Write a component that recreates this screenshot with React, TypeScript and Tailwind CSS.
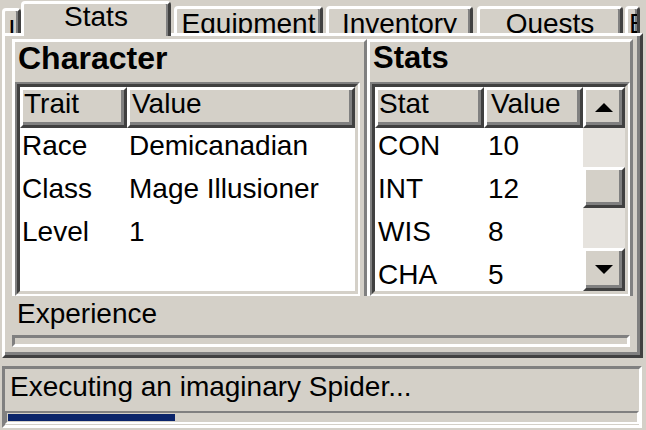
import React from 'react';

const raised =
  'border-[3px] border-t-white border-l-white border-r-[#404040] border-b-[#404040] shadow-[inset_-3px_-3px_0_#808080] bg-[#d4d0c8]';

interface Row {
  key: string;
  value: string;
}

const traits: Row[] = [
  { key: 'Race', value: 'Demicanadian' },
  { key: 'Class', value: 'Mage Illusioner' },
  { key: 'Level', value: '1' },
];

const stats: Row[] = [
  { key: 'CON', value: '10' },
  { key: 'INT', value: '12' },
  { key: 'WIS', value: '8' },
  { key: 'CHA', value: '5' },
];

function Tab({ label, className, active }: { label: string; className: string; active?: boolean }) {
  return (
    <div
      className={`${className} rounded-t-[4px] border-t-[3px] border-l-[3px] border-r-[3px] border-t-white border-l-white border-r-[#404040] shadow-[inset_-2px_0_0_#808080] bg-[#d4d0c8] overflow-hidden whitespace-nowrap text-center ${
        active ? 'relative z-10 -mb-[3px] leading-[26px]' : 'leading-[30px]'
      }`}
    >
      {label}
    </div>
  );
}

function Arrow({ down }: { down?: boolean }) {
  return (
    <svg width="18" height="9" viewBox="0 0 18 9">
      <polygon points={down ? '0,0 18,0 9,9' : '0,9 18,9 9,0'} fill="#000" />
    </svg>
  );
}

function ListView({
  cols,
  rows,
  widths,
  pads,
  scroll,
}: {
  cols: string[];
  rows: Row[];
  widths: string[];
  pads: string[];
  scroll?: boolean;
}) {
  return (
    <div className="h-[214px] border-[2px] border-t-[#808080] border-l-[#808080] border-b-white border-r-white">
      <div className="h-full border-[3px] border-t-[#404040] border-l-[#404040] border-b-[#d4d0c8] border-r-[#d4d0c8] bg-white flex overflow-hidden">
        <div className="flex-1 flex flex-col overflow-hidden">
          <div className="flex h-[41px] shrink-0">
            {cols.map((c, i) => (
              <div key={c} className={`${widths[i]} ${raised} leading-[27px] ${i === 0 ? 'pl-[1px]' : pads[1]}`}>
                {c}
              </div>
            ))}
          </div>
          {rows.map((r) => (
            <div key={r.key} className="flex h-[43px] shrink-0 leading-[35px]">
              <div className={`${widths[0]} ${pads[0]}`}>{r.key}</div>
              <div className={`${widths[1]} ${pads[1]}`}>{r.value}</div>
            </div>
          ))}
        </div>
        {scroll && (
          <div className="w-[42px] flex flex-col bg-[#e6e3de] shrink-0">
            <div className={`h-[41px] ${raised} flex items-center justify-center`}>
              <Arrow />
            </div>
            <div className="h-[39px]" />
            <div className={`h-[41px] ${raised}`} />
            <div className="h-[40px]" />
            <div className={`h-[43px] ${raised} flex items-center justify-center`}>
              <Arrow down />
            </div>
          </div>
        )}
      </div>
    </div>
  );
}

export default function App() {
  return (
    <div className="w-[646px] h-[430px] overflow-hidden bg-[#d4d0c8] text-black text-[28px] font-['Liberation_Sans',Arial,sans-serif]">
      <div className="flex items-end h-[33px]">
        <Tab label="ı" className="ml-[2px] w-[19px] h-[25px] text-left pl-[3px]" />
        <Tab label="Stats" className="w-[150px] h-[35px]" active />
        <Tab label="Equipment" className="ml-[3px] w-[149px] h-[27px]" />
        <Tab label="Inventory" className="ml-[3px] w-[147px] h-[27px]" />
        <Tab label="Quests" className="ml-[4px] w-[146px] h-[27px]" />
        <Tab label="B" className="ml-[2px] w-[15px] h-[27px] text-left pl-[1px]" />
      </div>

      <div className="ml-[2px] w-[641px] h-[325px] border-[3px] border-t-white border-l-white border-r-[#404040] border-b-[#404040] shadow-[inset_-3px_-3px_0_#808080] pl-[7px] pt-[3px]">
        <div className="flex h-[257px]">
          <div className="w-[355px] flex flex-col border-t-[3px] border-l-[3px] border-r-[3px] border-t-white border-l-white border-r-[#808080] pr-[4px]">
            <div className="h-[40px] pl-[3px] font-bold text-[32px] leading-[32px]">Character</div>
            <ListView
              cols={['Trait', 'Value']}
              rows={traits}
              widths={['w-[107px]', 'w-[228px]']}
              pads={['pl-[2px]', 'pl-[2px]']}
            />
          </div>
          <div className="w-[266px] flex flex-col border-t-[3px] border-l-[3px] border-r-[3px] border-t-white border-l-white border-r-[#808080]">
            <div className="h-[40px] pl-[3px] font-bold text-[31px] leading-[32px]">Stats</div>
            <ListView
              cols={['Stat', 'Value']}
              rows={stats}
              widths={['w-[109px]', 'w-[99px]']}
              pads={['pl-[3px]', 'pl-[4px]']}
              scroll
            />
          </div>
        </div>
        <div className="w-[618px]">
          <div className="h-[39px] pl-[5px] leading-[35px]">Experience</div>
          <div className="h-[12px] border-[3px] border-t-[#808080] border-l-[#808080] border-b-white border-r-white" />
        </div>
      </div>

      <div className="mt-[8px] ml-[2px] w-[640px] h-[62px] border-[3px] border-t-[#808080] border-l-[#808080] border-b-white border-r-white">
        <div className="h-[35px] pl-[5px] leading-[35px] whitespace-nowrap">Executing an imaginary Spider...</div>
        <div className="mt-[7px] h-[13px] border-[2px] border-t-[#808080] border-l-[#808080] border-b-white border-r-white">
          <div className="ml-[1px] mt-[1px] h-[7px] w-[167px] bg-[#0a246a]" />
        </div>
      </div>
    </div>
  );
}
